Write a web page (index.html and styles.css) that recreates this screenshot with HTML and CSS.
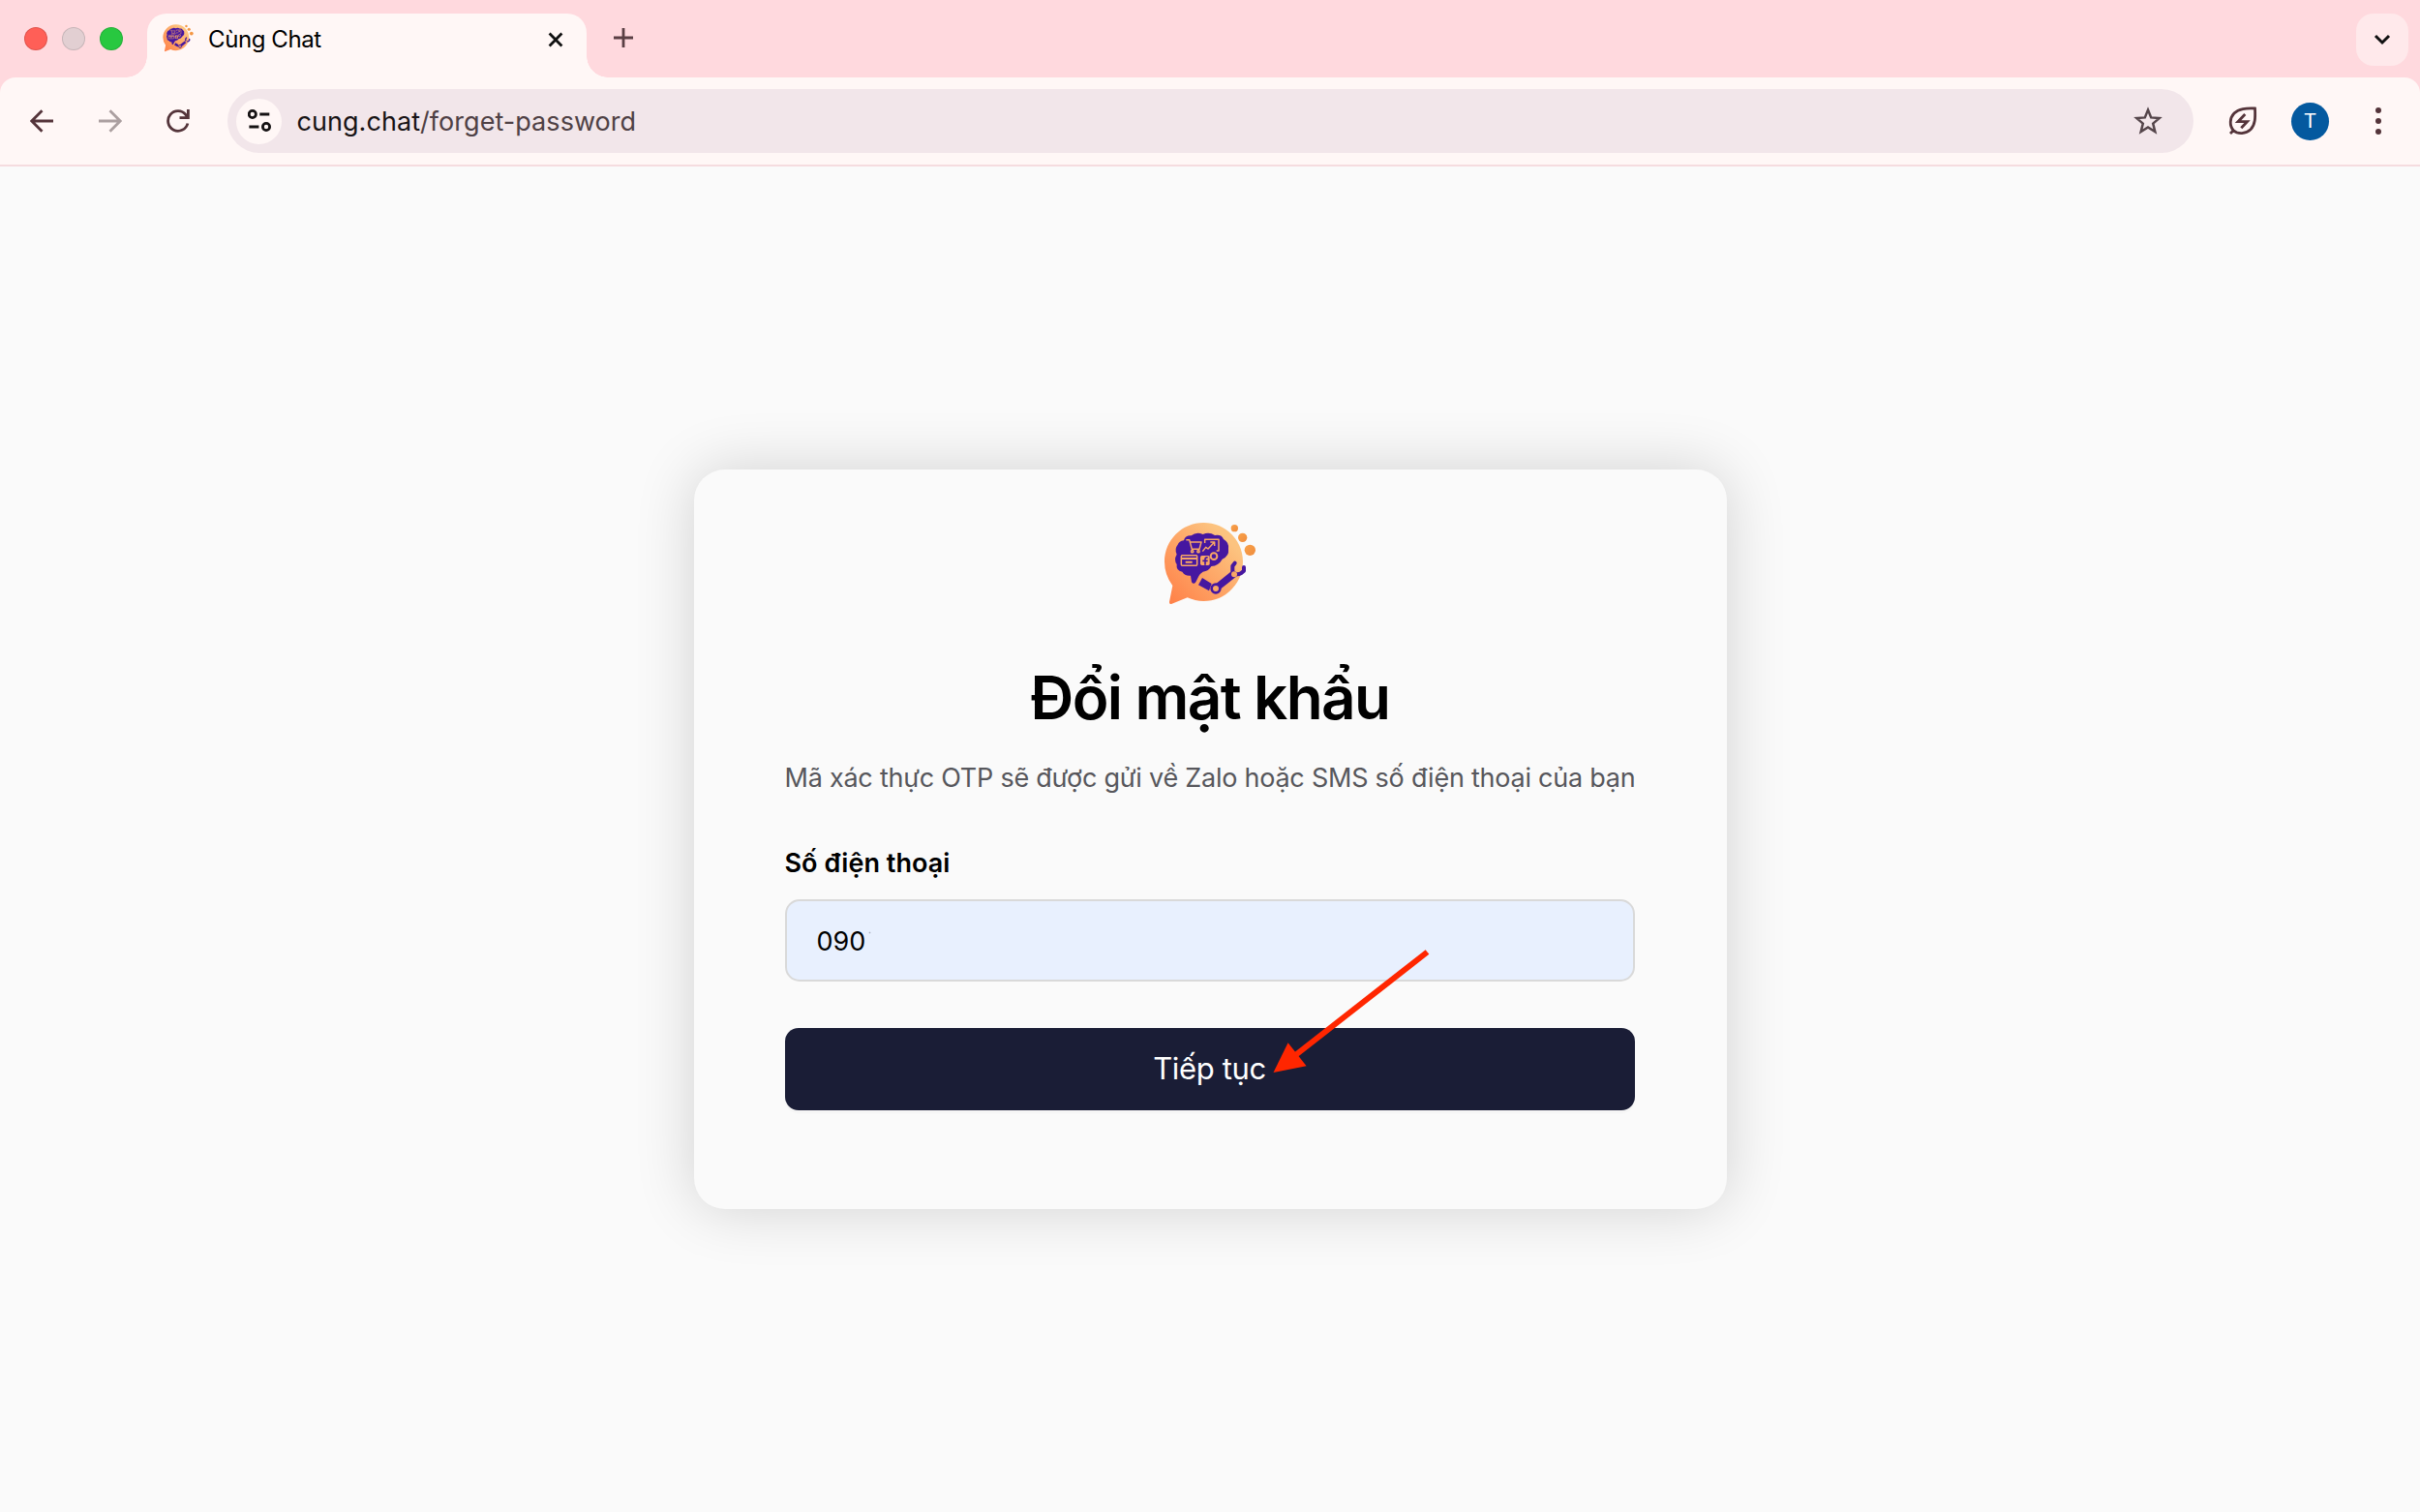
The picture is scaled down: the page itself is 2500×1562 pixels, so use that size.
FILE: index.html
```html
<!DOCTYPE html>
<html lang="vi">
<head>
<meta charset="utf-8">
<title>Cùng Chat</title>
<link rel="stylesheet" href="styles.css">
</head>
<body>
<svg width="0" height="0" class="defs" aria-hidden="true">
  <linearGradient id="bubble" x1="1" y1="0" x2="0" y2="1"><stop offset="0.2" stop-color="#fcc37f"/><stop offset="1" stop-color="#ff7d45"/></linearGradient>
  <linearGradient id="dot" x1="0" y1="0" x2="1" y2="1"><stop offset="0" stop-color="#f9a24b"/><stop offset="1" stop-color="#ef8c3c"/></linearGradient>
  <symbol id="logo" viewBox="0 0 360 330">
    <path fill="url(#bubble)" d="M160 45C228 45 282 99 282 166S228 288 160 288Q134 288 110 277L62 296Q53 299 54 290L64 240Q39 207 39 166C39 99 93 45 160 45Z"/>
    <circle cx="256" cy="62" r="11" fill="url(#dot)"/><circle cx="281" cy="91" r="14" fill="url(#dot)"/><circle cx="304" cy="130" r="17" fill="url(#dot)"/>
    <path fill="#4617a0" d="M99 100Q103 84 122 85Q138 72 158 81Q177 72 195 84Q216 80 222 96Q240 106 237 127Q240 149 218 158Q207 178 184 180Q176 195 158 197Q147 204 145 211L136 229Q129 238 123 229L120 209Q102 211 94 197Q74 194 77 174Q67 160 77 143Q69 126 80 113Q84 102 99 100Z"/>
    <g fill="none" stroke="#f9a765" stroke-width="4.5" stroke-linejoin="round">
      <path d="M106 98H116L124 127H147L153 105H119"/><circle cx="125" cy="134" r="3.5"/><circle cx="144" cy="134" r="3.5"/>
      <path d="M164 108V97H207V132H200M157 134L167 121L174 126L193 106M181 105H194V117"/><circle cx="192" cy="149" r="10" stroke-width="6"/>
      <rect x="91" y="146" width="49" height="32" rx="3"/><path d="M92 156H139M104 167H125" stroke-width="6"/>
    </g>
    <rect x="150" y="147" width="29" height="30" rx="5" fill="#f9a765"/>
    <path d="M165 176V158Q165 152 173 153M157 163H173" fill="none" stroke="#4617a0" stroke-width="5"/>
    <path d="M156 216L185 234L177 256L144 238Z" fill="#4617a0"/>
    <path d="M201 246L256 202" stroke="#4617a0" stroke-width="22"/>
    <circle cx="198" cy="249" r="13" fill="#f9a765" stroke="#4617a0" stroke-width="8"/>
    <path d="M257 170L250 179V196Q260 210 276 202L285 194V183" fill="none" stroke="#4617a0" stroke-width="12" stroke-linecap="round" stroke-linejoin="round"/>
    <circle cx="255" cy="205" r="9" fill="#f9a765"/>
  </symbol>
</svg>
<header class="browser">
  <div class="strip">
    <div class="lights"><i class="red"></i><i class="grey"></i><i class="green"></i></div>
    <div class="tab">
      <svg class="favicon"><use href="#logo"/></svg>
      <span class="tab-title">Cùng Chat</span>
      <svg class="close" viewBox="0 0 16 16"><path d="M1.6 1.6L14.4 14.4M14.4 1.6L1.6 14.4"/></svg>
    </div>
    <svg class="plus" viewBox="0 0 20 20"><path d="M10 0V20M0 10H20"/></svg>
    <div class="chevron"><svg width="18" height="12" viewBox="0 0 18 12"><path d="M2 2L9 9L16 2"/></svg></div>
  </div>
  <div class="toolbar">
    <svg class="nav" viewBox="0 0 24 24"><path d="M24 12H2M12.5 1.3L1.8 12L12.5 22.7"/></svg>
    <svg class="nav forward" viewBox="0 0 24 24"><path d="M0 12H22M11.5 1.3L22.2 12L11.5 22.7"/></svg>
    <svg class="nav" viewBox="0 0 24 24"><path d="M21.9 14.5A10.3 10.3 0 1 1 20 5.6L22 8M22.4 0V8.7H13.5"/></svg>
    <div class="omnibox">
      <span class="site"><svg width="24" height="24" viewBox="0 0 24 24"><circle cx="4.8" cy="5" r="3.6"/><path d="M12.3 5H22.3M1.4 18H11.4"/><circle cx="19" cy="18" r="3.6"/></svg></span>
      <span class="url"><b>cung.chat</b>/forget-password</span>
      <svg class="star" viewBox="0 0 30 30"><path d="M15 3.5L18.2 11.4L26.7 12.1L20.2 17.6L22.3 26L15 21.5L7.7 26L9.8 17.6L3.3 12.1L11.8 11.4Z"/></svg>
    </div>
    <svg class="leaf" viewBox="0 0 30 30"><path d="M2 28L5.3 24.7C1 20 1.2 12 6 7C11 2 18 1.7 27.5 2C28 12 27.8 19 23 23.8C18 28.5 10 29 5.3 24.7M17.3 8L10 15.7H19.5L13.3 22.3"/></svg>
    <span class="avatar">T</span>
    <div class="menu"><i></i><i></i><i></i></div>
  </div>
</header>
<main class="page">
  <section class="card">
    <svg class="logo"><use href="#logo"/></svg>
    <h1>Đổi mật khẩu</h1>
    <p class="hint">Mã xác thực OTP sẽ được gửi về Zalo hoặc SMS số điện thoại của bạn</p>
    <label for="phone">Số điện thoại</label>
    <input id="phone" type="text" value="090">
    <button type="button">Tiếp tục</button>
    <svg class="arrow" viewBox="0 0 164 130"><path d="M159.5 3.5L22 111" stroke="#ff2600" stroke-width="6"/><path d="M.5 128L15.6 97.3L34.6 121.3Z" fill="#ff2600"/></svg>
  </section>
</main>
</body>
</html>
```
FILE: styles.css
```css
* { box-sizing: border-box; }
body { margin: 0; height: 1562px; display: flex; flex-direction: column; overflow: hidden; background: #fafafa; font-family: Inter, sans-serif; color: #000; }
svg { display: block; flex: none; }
.defs { position: absolute; }
.browser { background: #ffd9de; }
.strip { height: 80px; display: flex; align-items: flex-start; padding: 14px 12px 0 25px; }
.lights { display: flex; gap: 15px; padding-top: 14px; width: 127px; }
.lights i { width: 24px; height: 24px; border-radius: 50%; border: 1px solid rgba(0,0,0,.12); }
.red { background: #ff5f57; }
.grey { background: #e2cfd2; }
.green { background: #28c840; }
.tab { position: relative; width: 454px; height: 66px; display: flex; align-items: flex-start; padding: 6px 24px 0 12px; background: #fff7f6; border-radius: 20px 20px 0 0; }
.tab::before, .tab::after { content: ""; position: absolute; bottom: 0; width: 22px; height: 22px; }
.tab::before { right: 100%; background: radial-gradient(circle at 0 0, transparent 21.5px, #fff7f6 22px); }
.tab::after { left: 100%; background: radial-gradient(circle at 100% 0, transparent 21.5px, #fff7f6 22px); }
.favicon { width: 40px; height: 37px; }
.tab-title { margin: 5px auto 0 11px; font-size: 24px; line-height: 32px; letter-spacing: -.4px; white-space: nowrap; }
.close { width: 16px; height: 16px; margin-top: 13px; }
.close path { stroke: #111; stroke-width: 2.8; }
.plus { width: 20px; height: 20px; margin: 15px auto 0 28px; }
.plus path { stroke: #5a3f44; stroke-width: 2.8; }
.chevron { width: 54px; height: 54px; border-radius: 18px; background: #ffe9eb; display: grid; place-items: center; }
.chevron path { fill: none; stroke: #111; stroke-width: 3; }
.toolbar { height: 92px; background: #fff7f6; border-bottom: 2px solid #f5dcdf; border-radius: 16px 16px 0 0; display: flex; align-items: center; padding: 0 40px 0 31px; }
.nav { width: 24px; height: 24px; margin-right: 46.5px; }
.nav path { fill: none; stroke: #54343a; stroke-width: 2.8; }
.nav.forward path { stroke: #ab9fa0; }
.omnibox { flex: 1; margin-left: -8px; height: 66px; border-radius: 33px; background: #f2e6ea; display: flex; align-items: center; padding: 0 31.5px 0 9.5px; }
.site { width: 47px; height: 47px; border-radius: 50%; background: #fff7f6; display: grid; place-items: center; }
.site svg { fill: none; stroke: #151213; stroke-width: 2.8; }
.url { margin: 0 auto 0 15.5px; font-size: 27px; letter-spacing: .05px; color: #4f4145; white-space: nowrap; }
.url b { font-weight: 400; color: #191416; }
.star { width: 30px; height: 30px; }
.star path { fill: none; stroke: #55464b; stroke-width: 2.5; }
.leaf { width: 30px; height: 30px; margin-left: 36.5px; }
.leaf path { fill: none; stroke: #54343a; stroke-width: 2.8; }
.avatar { width: 39px; height: 39px; margin-left: 35px; border-radius: 50%; background: #04599f; color: #fff; font: 21px/39px Roboto, sans-serif; text-align: center; }
.menu { margin-left: 48px; display: grid; gap: 5px; }
.menu i { width: 6px; height: 6px; border-radius: 50%; background: #54343a; }
.page { flex: 1; display: flex; align-items: flex-start; justify-content: center; padding-top: 313px; }
.card { position: relative; width: 1067px; height: 763.5px; border-radius: 32px; padding: 40px 94px; background: #fafafa; box-shadow: 0 0 62px rgba(0,0,0,.165); display: flex; flex-direction: column; }
.logo { width: 120px; height: 110px; align-self: center; }
h1 { margin: 46px 0 0; align-self: center; font-size: 62px; line-height: 80px; font-weight: 600; letter-spacing: -1.6px; white-space: nowrap; }
.hint { margin: 23px 0 0; align-self: flex-start; font-size: 27px; line-height: 40px; letter-spacing: -.24px; color: #57575c; white-space: nowrap; }
label { margin-top: 48px; font-size: 27px; line-height: 40px; font-weight: 600; letter-spacing: .05px; }
input { margin-top: 17px; width: 878px; height: 85px; border: 2px solid #d9d9d9; border-radius: 15px; background: radial-gradient(circle, #aeb5c4, #e8f0fe 70%) 84px 31px / 3px 3px no-repeat #e8f0fe; padding: 2px 31px 0; font: 27px Inter, sans-serif; color: #000; flex: none; }
button { margin-top: 47.5px; width: 878px; height: 85.5px; flex: none; border: 0; border-radius: 14px; background: #1a1d36; box-shadow: 0 3px 2px rgba(0,0,0,.025); color: #fff; font: 31px Inter, sans-serif; letter-spacing: -.35px; padding: 0 0 2px; }
.arrow { position: absolute; left: 598px; top: 495px; width: 164px; height: 130px; }
```
